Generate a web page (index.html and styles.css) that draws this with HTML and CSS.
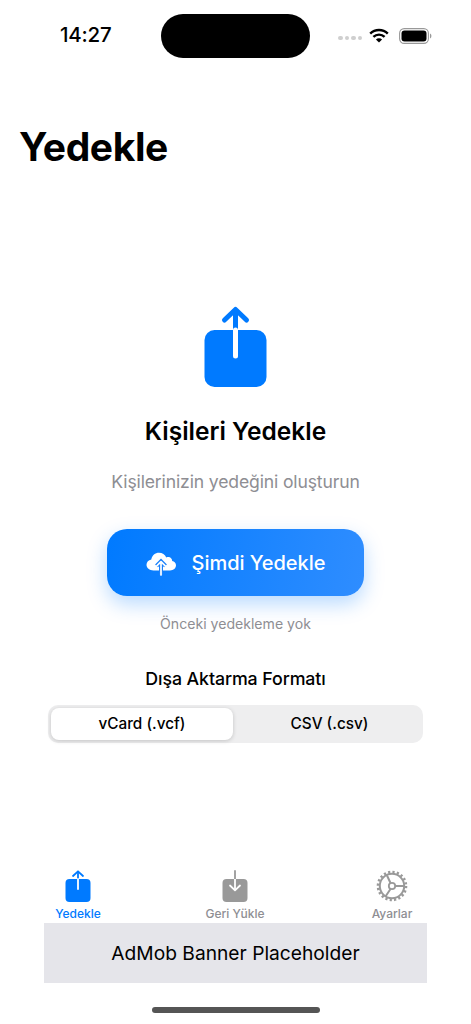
FILE: index.html
```html
<!DOCTYPE html>
<html lang="tr">
<head>
<meta charset="utf-8">
<title>Yedekle</title>
<link rel="stylesheet" href="styles.css">
</head>
<body>
<div class="screen">
  <header class="status">
    <span class="time">14:27</span>
    <span class="island"></span>
    <span class="status-icons">
      <span class="dots"><i></i><i></i><i></i><i></i></span>
      <svg class="wifi" width="20" height="15" viewBox="0 0 20 15"><path d="M1.200 5.600a12.600 12.600 0 0 1 17.600 0" fill="none" stroke="#000" stroke-width="2.400"/><path d="M4.400 8.900a8 8 0 0 1 11.200 0" fill="none" stroke="#000" stroke-width="2.400"/><path d="M10 14.600 6.900 11.500a4.400 4.400 0 0 1 6.200 0z" fill="#000"/></svg>
      <svg class="battery" width="33" height="16" viewBox="0 0 33 16"><rect x=".6" y=".6" width="28.800" height="14.800" rx="4.600" fill="none" stroke="#999" stroke-width="1.100"/><rect x="2.500" y="2.500" width="25" height="11" rx="3" fill="#000"/><path d="M31 5.600c1 .4 1.400 1.300 1.400 2.400s-.4 2-1.400 2.400z" fill="#999"/></svg>
    </span>
  </header>

  <h1 class="title">Yedekle</h1>

  <main class="content">
    <svg class="hero" width="64" height="82" viewBox="0 0 64 82">
      <rect x=".5" y="24" width="62" height="57" rx="10" fill="#007aff"/>
      <path d="M20.500 14 31.500 3.500 42.500 14" fill="none" stroke="#007aff" stroke-width="5" stroke-linecap="round" stroke-linejoin="round"/>
      <path d="M31.500 4v20" stroke="#007aff" stroke-width="5"/>
      <path d="M31.500 24v26" stroke="#fff" stroke-width="5" stroke-linecap="round"/>
    </svg>
    <h2 class="heading">Kişileri Yedekle</h2>
    <p class="sub">Kişilerinizin yedeğini oluşturun</p>
    <button class="cta">
      <svg width="30" height="26" viewBox="0 0 30 26"><path d="M7.500 20.500C3.500 20.500 .5 18 .5 14.800c0-2.800 2-4.900 4.800-5.400C6 5.500 9.200 2.800 13 2.800c3.300 0 6 1.800 7.300 4.600 1-.5 1.900-.6 2.700-.4 1.900.4 3.100 2 3.200 4 2.200.5 3.800 2.100 3.800 4.300 0 3-2.500 5.200-6 5.200z" fill="#fff"/><path d="M15 25V12M10.500 15.800 15 11.300l4.500 4.500" fill="none" stroke="#1a80fb" stroke-width="4"/><path d="M15 25V12M10.800 15.800 15 11.600l4.200 4.200" fill="none" stroke="#fff" stroke-width="1.700" stroke-linecap="round" stroke-linejoin="round"/></svg>
      <span>Şimdi Yedekle</span>
    </button>
    <p class="note">Önceki yedekleme yok</p>
    <h3 class="format-title">Dışa Aktarma Formatı</h3>
    <div class="segmented">
      <span class="segment selected">vCard (.vcf)</span>
      <span class="segment other">CSV (.csv)</span>
    </div>
  </main>

  <nav class="tabs">
    <a class="tab active">
      <svg width="28" height="32" viewBox="0 0 28 32"><rect x="1.500" y="9" width="25" height="23" rx="4" fill="#007aff"/><path d="M9 6 14 1.300 19 6" fill="none" stroke="#007aff" stroke-width="1.800" stroke-linecap="round" stroke-linejoin="round"/><path d="M14 2v7" stroke="#007aff" stroke-width="1.800"/><path d="M14 9v10" stroke="#fff" stroke-width="1.800" stroke-linecap="round"/></svg>
      <span>Yedekle</span>
    </a>
    <a class="tab">
      <svg width="28" height="32" viewBox="0 0 28 32"><rect x="1.500" y="9" width="25" height="23" rx="4" fill="#999"/><path d="M14 1v8" stroke="#999" stroke-width="1.800" stroke-linecap="round"/><path d="M14 9v11" stroke="#fff" stroke-width="1.800"/><path d="M9 15.500l5 4.800 5-4.800" fill="none" stroke="#fff" stroke-width="1.800" stroke-linecap="round" stroke-linejoin="round"/></svg>
      <span>Geri Yükle</span>
    </a>
    <a class="tab">
      <svg width="32" height="32" viewBox="0 0 32 32"><circle cx="16" cy="16" r="12.200" fill="none" stroke="#999" stroke-width="2"/><circle cx="16" cy="16" r="14" fill="none" stroke="#999" stroke-width="2.600" stroke-dasharray="2.200 2.200"/><circle cx="16" cy="16" r="3.200" fill="none" stroke="#999" stroke-width="1.800"/><path d="M11 5.500 14.500 13M19 16h9M14.500 19l-5 7.500" fill="none" stroke="#999" stroke-width="2"/></svg>
      <span>Ayarlar</span>
    </a>
  </nav>

  <div class="banner">AdMob Banner Placeholder</div>
  <div class="home-row"><span class="home-bar"></span></div>
</div>
</body>
</html>
```
FILE: styles.css
```css
* { box-sizing: border-box; }
html, body { margin: 0; padding: 0; background: #fff; }
body { font-family: Inter, "Liberation Sans", sans-serif; color: #000; }
.screen { width: 471px; height: 1024px; display: flex; flex-direction: column; overflow: hidden; }

.status { height: 58px; padding: 14px 38px 0 60px; display: flex; align-items: flex-start; }
.time { width: 101px; font-size: 20.500px; font-weight: 550; line-height: 44px; height: 44px; letter-spacing: -.2px; margin-top: -1px; }
.island { width: 149px; height: 44px; border-radius: 22px; background: #000; flex: none; }
.status-icons { margin-left: 28px; height: 44px; display: flex; align-items: center; }
.dots { display: flex; gap: 2px; margin-right: 7px; margin-top: 4px; }
.dots i { width: 4.500px; height: 4.500px; border-radius: 50%; background: #cfcfcf; }
.wifi { margin-right: 10px; margin-top: -2px; }
.battery { margin-top: -1px; }

.title { margin: 66px 0 0 19px; font-size: 39px; line-height: 46px; font-weight: 700; letter-spacing: -.4px; }

.content { display: flex; flex-direction: column; align-items: center; padding-top: 136px; height: 706px; }
.hero { display: block; }
.heading { margin: 28px 0 0; font-size: 24.500px; line-height: 30px; font-weight: 600; }
.sub { margin: 24px 0 0; font-size: 17.600px; line-height: 24px; color: #8e8e93; letter-spacing: -.15px; }
.cta { margin-top: 35px; width: 257px; height: 67px; border: 0; border-radius: 20px; color: #fff; font: 500 20px/24px Inter, sans-serif; letter-spacing: -.05px;
  background: linear-gradient(100deg, #007aff, #2f8dff); box-shadow: 0 8px 20px rgba(0,122,255,.28); display: flex; align-items: center; justify-content: center; gap: 16px; padding: 0; }
.note { margin: 18px 0 0; font-size: 14.100px; line-height: 20px; color: #8e8e93; }
.format-title { margin: 34px 0 0; font-size: 17.800px; line-height: 22px; font-weight: 450; letter-spacing: -.1px; }
.segmented { margin-top: 15px; width: 375px; height: 38px; padding: 3px; border-radius: 10px; background: #eeeeef; display: flex; }
.segment { display: flex; align-items: center; justify-content: center; font-size: 15.300px; font-weight: 450; line-height: 20px; border-radius: 8px; }
.selected { flex: none; width: 182px; background: #fff; box-shadow: 0 1px 4px rgba(0,0,0,.18); }
.other { flex: 1; padding-left: 6px; }

.tabs { display: flex; justify-content: space-between; height: 53px; padding: 0 27px 0 26px; margin-top: -6px; }
.tab { width: 104px; display: flex; flex-direction: column; align-items: center; color: #8e8e93; font-size: 12px; font-weight: 450; line-height: 15px; }
.tab svg { display: block; margin-bottom: 4px; height: 32px; }
.tab span { display: block; }
.tab.active { color: #007aff; }

.banner { margin: 0 44px; height: 60px; background: #e5e5ea; display: flex; align-items: center; justify-content: center; font-size: 19.200px; }
.home-row { flex: 1; display: flex; justify-content: center; padding-top: 24px; }
.home-bar { width: 168px; height: 6px; border-radius: 3px; background: #555; }
```
